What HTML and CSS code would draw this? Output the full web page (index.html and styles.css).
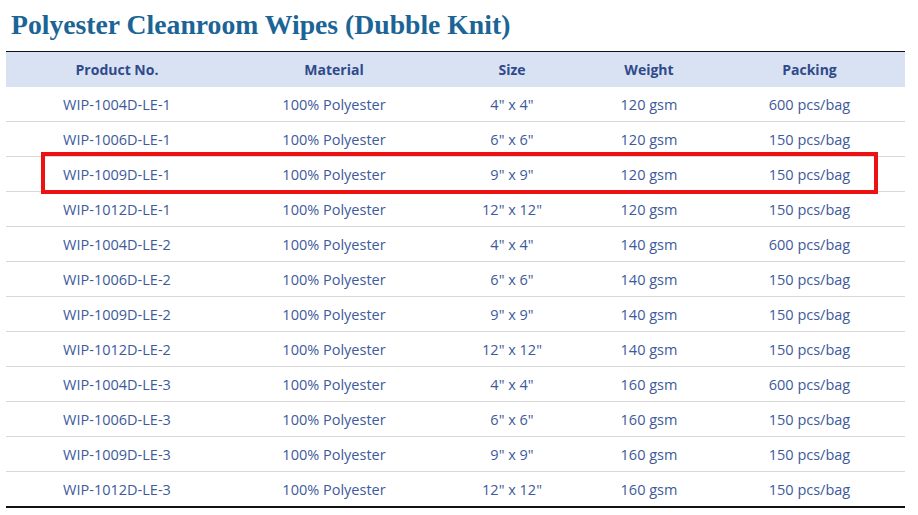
FILE: index.html
```html
<!DOCTYPE html>
<html>
<head>
<meta charset="utf-8">
<link rel="stylesheet" href="styles.css">
</head>
<body>
<h1 class="title">Polyester Cleanroom Wipes (Dubble Knit)</h1>
<div class="table-wrap">
<table class="spec">
<thead>
<tr><th class="c1">Product No.</th><th class="c2">Material</th><th class="c3">Size</th><th class="c4">Weight</th><th class="c5">Packing</th></tr>
</thead>
<tbody>
<tr><td>WIP-1004D-LE-1</td><td>100% Polyester</td><td>4" x 4"</td><td>120 gsm</td><td>600 pcs/bag</td></tr>
<tr><td>WIP-1006D-LE-1</td><td>100% Polyester</td><td>6" x 6"</td><td>120 gsm</td><td>150 pcs/bag</td></tr>
<tr><td>WIP-1009D-LE-1</td><td>100% Polyester</td><td>9" x 9"</td><td>120 gsm</td><td>150 pcs/bag</td></tr>
<tr><td>WIP-1012D-LE-1</td><td>100% Polyester</td><td>12" x 12"</td><td>120 gsm</td><td>150 pcs/bag</td></tr>
<tr><td>WIP-1004D-LE-2</td><td>100% Polyester</td><td>4" x 4"</td><td>140 gsm</td><td>600 pcs/bag</td></tr>
<tr><td>WIP-1006D-LE-2</td><td>100% Polyester</td><td>6" x 6"</td><td>140 gsm</td><td>150 pcs/bag</td></tr>
<tr><td>WIP-1009D-LE-2</td><td>100% Polyester</td><td>9" x 9"</td><td>140 gsm</td><td>150 pcs/bag</td></tr>
<tr><td>WIP-1012D-LE-2</td><td>100% Polyester</td><td>12" x 12"</td><td>140 gsm</td><td>150 pcs/bag</td></tr>
<tr><td>WIP-1004D-LE-3</td><td>100% Polyester</td><td>4" x 4"</td><td>160 gsm</td><td>600 pcs/bag</td></tr>
<tr><td>WIP-1006D-LE-3</td><td>100% Polyester</td><td>6" x 6"</td><td>160 gsm</td><td>150 pcs/bag</td></tr>
<tr><td>WIP-1009D-LE-3</td><td>100% Polyester</td><td>9" x 9"</td><td>160 gsm</td><td>150 pcs/bag</td></tr>
<tr><td>WIP-1012D-LE-3</td><td>100% Polyester</td><td>12" x 12"</td><td>160 gsm</td><td>150 pcs/bag</td></tr>
</tbody>
</table>
<div class="highlight"></div>
</div>
</body>
</html>
```
FILE: styles.css
```css
html, body {
  margin: 0;
  padding: 0;
  background: #ffffff;
}
body {
  padding: 0 0 0 6px;
}
.title {
  margin: 0;
  padding: 9px 0 0 5px;
  height: 51px;
  box-sizing: border-box;
  font-family: "Liberation Serif", "Times New Roman", serif;
  font-weight: bold;
  font-size: 27.7px;
  line-height: 32px;
  color: #1b6496;
}
.table-wrap {
  position: relative;
  width: 899px;
}
.spec {
  width: 899px;
  border-collapse: collapse;
  table-layout: fixed;
  font-family: "Open Sans", "Liberation Sans", sans-serif;
  font-size: 14.5px;
  color: #3d5a9b;
  border-top: 1px solid #111;
  border-bottom: 2px solid #111;
}
.spec th {
  background: #d9e2f3;
  color: #2f4a8a;
  font-weight: bold;
  font-size: 14px;
  height: 35px;
  padding: 0;
  text-align: center;
}
.spec td {
  height: 34px;
  padding: 0;
  text-align: center;
  border-top: 1px solid #d8d8d8;
}
.spec tbody tr:first-child td {
  border-top: none;
  height: 34px;
}
.c1 { width: 222px; }
.c2 { width: 212px; }
.c3 { width: 144px; }
.c4 { width: 130px; }
.c5 { width: 191px; }
.highlight {
  position: absolute;
  left: 35px;
  top: 101px;
  width: 837px;
  height: 42px;
  box-sizing: border-box;
  border: 4px solid #ee1111;
  pointer-events: none;
}
```
